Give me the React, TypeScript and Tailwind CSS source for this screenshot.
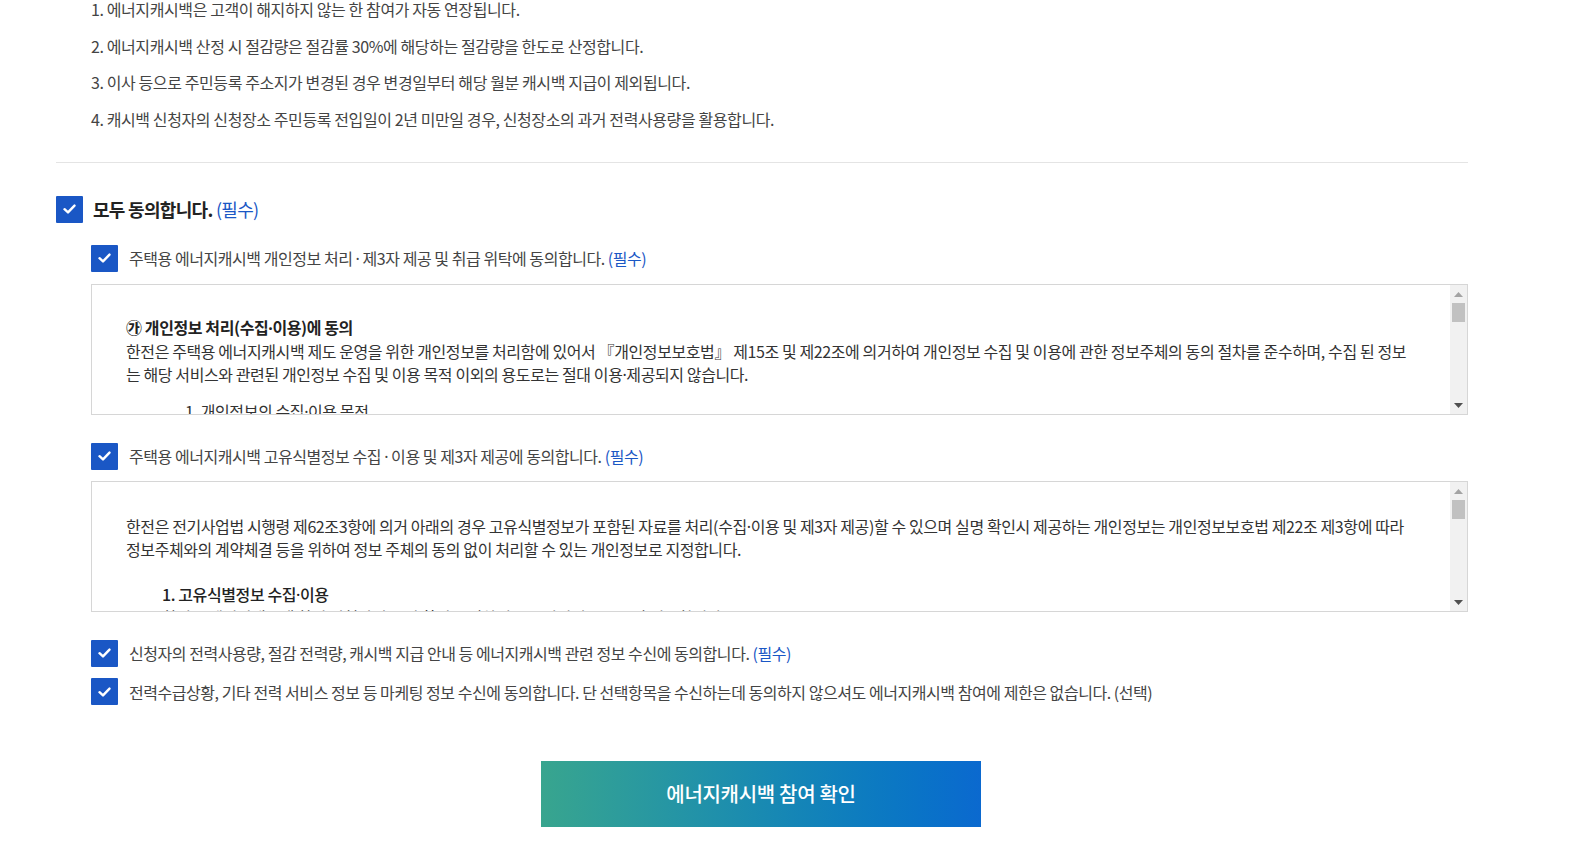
import React from 'react';

const notices = [
  '1. 에너지캐시백은 고객이 해지하지 않는 한 참여가 자동 연장됩니다.',
  '2. 에너지캐시백 산정 시 절감량은 절감률 30%에 해당하는 절감량을 한도로 산정합니다.',
  '3. 이사 등으로 주민등록 주소지가 변경된 경우 변경일부터 해당 월분 캐시백 지급이 제외됩니다.',
  '4. 캐시백 신청자의 신청장소 주민등록 전입일이 2년 미만일 경우, 신청장소의 과거 전력사용량을 활용합니다.',
];

// narrow middle dot (the CJK font draws it full width)
const Dot: React.FC = () => (
  <span style={{ fontFamily: '"Noto Sans", sans-serif' }}>·</span>
);

const CheckBox: React.FC = () => (
  <span className="flex h-[27px] w-[27px] shrink-0 items-center justify-center rounded-[1px] bg-[#1a57c5]">
    <svg width="13" height="10" viewBox="0 0 13 10" fill="none">
      <path d="M1.5 5.2L5 8.4L11.5 1.6" stroke="white" strokeWidth="2.4" strokeLinecap="round" strokeLinejoin="round" />
    </svg>
  </span>
);

const Required: React.FC<{ label?: string }> = ({ label = '(필수)' }) => (
  <span className="font-normal text-[#1a57c5]">{label}</span>
);

const AgreeRow: React.FC<{ children: React.ReactNode }> = ({ children }) => (
  <label className="flex items-center gap-[11px]">
    <CheckBox />
    <span className="text-[16px] tracking-[-0.45px] text-[#444]">{children}</span>
  </label>
);

const FakeScrollbar: React.FC = () => (
  <div className="flex w-[17px] shrink-0 flex-col items-center bg-[#f1f1f1] py-[6px]">
    <svg width="9" height="5" viewBox="0 0 9 5" className="mt-[1px]">
      <path d="M0 5L4.5 0L9 5Z" fill="#a3a3a3" />
    </svg>
    <div className="mt-[6px] h-[19px] w-[13px] bg-[#c1c1c1]" />
    <div className="flex-1" />
    <svg width="9" height="5" viewBox="0 0 9 5">
      <path d="M0 0L4.5 5L9 0Z" fill="#505050" />
    </svg>
  </div>
);

const TermsBox: React.FC<{ children: React.ReactNode }> = ({ children }) => (
  <div className="flex h-[131px] border border-[#d6d6d6] bg-white">
    <div className="flex-1 overflow-hidden pl-[34px] pr-[36px] text-[16px] leading-[23px] tracking-[-0.4px] text-[#333]">
      {children}
    </div>
    <FakeScrollbar />
  </div>
);

export default function App() {
  return (
    <div
      className="h-[851px] overflow-hidden bg-white"
      style={{ fontFamily: '"Noto Sans CJK KR", "Noto Sans", sans-serif' }}
    >
      <div className="ml-[56px] w-[1412px]">
        <ul className="mt-px flex flex-col gap-[20.5px] pl-[35px] text-[16px] leading-[16px] tracking-[-0.4px] text-[#444]">
          {notices.map((n) => (
            <li key={n}>{n}</li>
          ))}
        </ul>

        <div className="mt-[35px] h-px bg-[#e4e4e4]" />

        <label className="mt-[33px] flex items-center gap-[10px]">
          <CheckBox />
          <span className="text-[18px] font-bold tracking-[-0.7px] text-[#222]">
            모두 동의합니다. <Required />
          </span>
        </label>

        <div className="pl-[35px]">
          <div className="mt-[22px]">
            <AgreeRow>
              주택용 에너지캐시백 개인정보 처리 <Dot /> 제3자 제공 및 취급 위탁에 동의합니다. <Required />
            </AgreeRow>
          </div>
          <div className="mt-[12px]">
            <TermsBox>
              <div className="pt-[31px]">
                <p className="font-bold text-[#222]">
                  ㉮ 개인정보 처리(수집<Dot />이용)에 동의
                </p>
                <p>
                  한전은 주택용 에너지캐시백 제도 운영을 위한 개인정보를 처리함에 있어서 『개인정보보호법』 제15조 및 제22조에 의거하여 개인정보 수집 및 이용에 관한 정보주체의 동의 절차를 준수하며, 수집 된 정보는 해당 서비스와 관련된 개인정보 수집 및 이용 목적 이외의 용도로는 절대 이용<Dot />제공되지 않습니다.
                </p>
                <p className="mt-[13px] pl-[59px]">
                  1. 개인정보의 수집<Dot />이용 목적
                </p>
              </div>
            </TermsBox>
          </div>

          <div className="mt-[28px]">
            <AgreeRow>
              주택용 에너지캐시백 고유식별정보 수집 <Dot /> 이용 및 제3자 제공에 동의합니다. <Required />
            </AgreeRow>
          </div>
          <div className="mt-[11px]">
            <TermsBox>
              <div className="pt-[33px]">
                <p className="leading-[22.5px] break-keep">
                  한전은 전기사업법 시행령 제62조3항에 의거 아래의 경우 고유식별정보가 포함된 자료를 처리(수집<Dot />이용 및 제3자 제공)할 수 있으며 실명 확인시 제공하는 개인정보는 개인정보보호법 제22조 제3항에 따라 정보주체와의 계약체결 등을 위하여 정보 주체의 동의 없이 처리할 수 있는 개인정보로 지정합니다.
                </p>
                <p className="mt-[22px] pl-[36px] font-medium text-[#222]">
                  1. 고유식별정보 수집<Dot />이용
                </p>
                <p className="pl-[36px] leading-[20px]">
                  한전은 에너지캐시백 참여 신청자의 본인 확인을 위하여 고유식별정보를 수집<Dot />이용합니다.
                </p>
              </div>
            </TermsBox>
          </div>

          <div className="mt-[28px] flex flex-col gap-[11.5px]">
            <AgreeRow>
              신청자의 전력사용량, 절감 전력량, 캐시백 지급 안내 등 에너지캐시백 관련 정보 수신에 동의합니다. <Required />
            </AgreeRow>
            <AgreeRow>
              전력수급상황, 기타 전력 서비스 정보 등 마케팅 정보 수신에 동의합니다. 단 선택항목을 수신하는데 동의하지 않으셔도 에너지캐시백 참여에 제한은 없습니다. (선택)
            </AgreeRow>
          </div>
        </div>

        <div className="mt-[56px] flex pl-[485px]">
          <button
            type="button"
            className="h-[66px] w-[440px] bg-gradient-to-r from-[#38a58e] to-[#0b69cf] text-[20px] font-medium tracking-[-0.3px] text-white"
          >
            에너지캐시백 참여 확인
          </button>
        </div>
      </div>
    </div>
  );
}
